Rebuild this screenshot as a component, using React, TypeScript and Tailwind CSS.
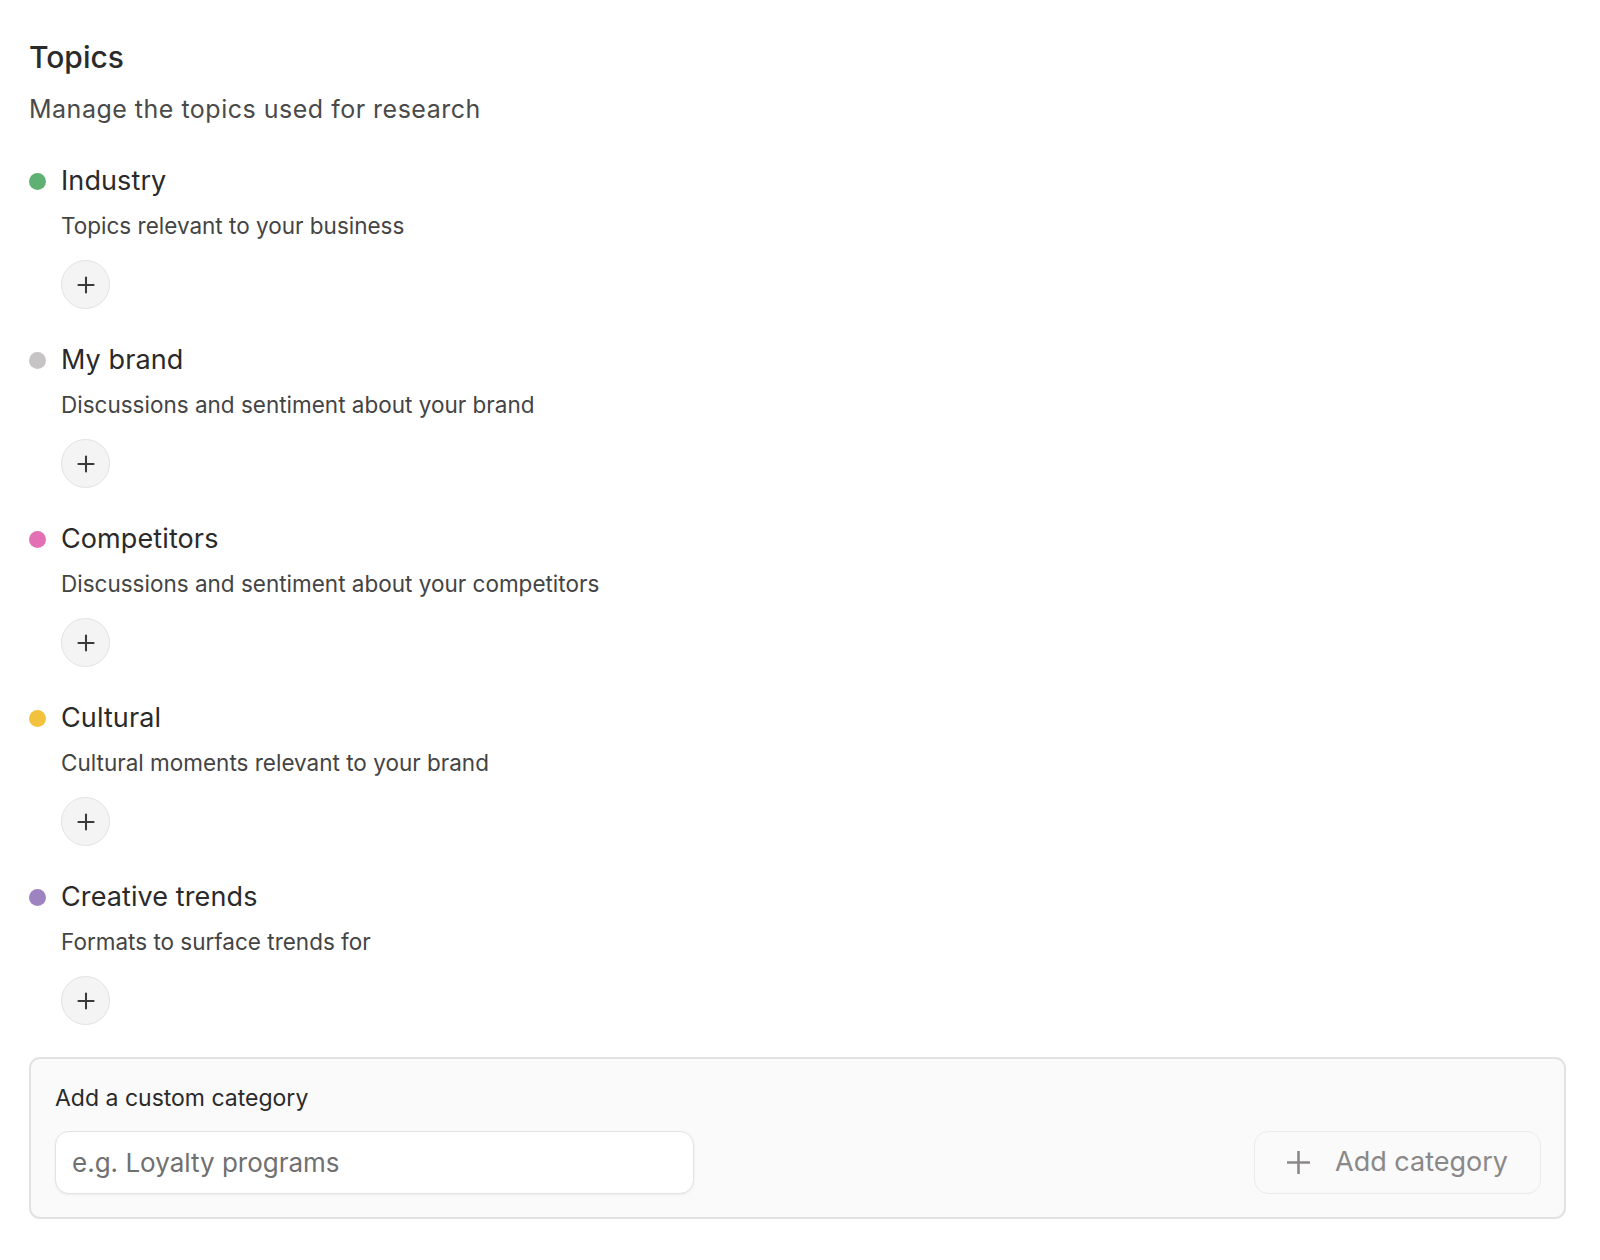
import { Plus } from "lucide-react";

const categories = [
  { name: "Industry", description: "Topics relevant to your business", color: "bg-[#5fb073]" },
  { name: "My brand", description: "Discussions and sentiment about your brand", color: "bg-[#c6c4c4]" },
  { name: "Competitors", description: "Discussions and sentiment about your competitors", color: "bg-[#e36fb4]" },
  { name: "Cultural", description: "Cultural moments relevant to your brand", color: "bg-[#f2c23c]" },
  { name: "Creative trends", description: "Formats to surface trends for", color: "bg-[#9d83c0]" },
];

export default function App() {
  return (
    <div className="min-h-screen bg-white px-[29px] pt-[38px] text-[#2b2b2b] [font-family:Inter,'Noto_Sans',sans-serif]">
      <h1 className="text-[30px] font-medium leading-[38px]">Topics</h1>
      <p className="mt-[16px] text-[25px] leading-[34px] tracking-[0.5px] text-[#4a4a4a]">
        Manage the topics used for research
      </p>

      <div className="mt-[38px] flex flex-col gap-[34px]">
        {categories.map((c) => (
          <section key={c.name}>
            <div className="flex items-center">
              <span className={`h-[17px] w-[17px] rounded-full ${c.color}`} />
              <h2 className="ml-[15px] text-[27px] leading-[34px] tracking-[0.1px] text-[#2a2a2a]">{c.name}</h2>
            </div>
            <p className="ml-[32px] mt-[13px] text-[22.5px] leading-[30px] text-[#444444]">{c.description}</p>
            <button className="ml-[32px] mt-[19px] flex h-[49px] w-[49px] items-center justify-center rounded-full border border-[#e2e2e2] bg-[#f4f4f4] text-[#3a3a3a]">
              <Plus size={26} strokeWidth={1.9} />
            </button>
          </section>
        ))}
      </div>

      <div className="mt-[32px] w-[1537px] rounded-[11px] border-2 border-[#e2e2e2] bg-[#fafafa] pb-[23px] pl-[24px] pr-[23px] pt-[24px]">
        <div className="text-[23px] leading-[30px] text-[#2a2a2a]">Add a custom category</div>
        <div className="mt-[18px] flex items-center justify-between">
          <input
            type="text"
            placeholder="e.g. Loyalty programs"
            className="h-[63px] w-[639px] rounded-[14px] border border-[#e3e3e3] bg-white px-[16px] text-[26px] text-[#2a2a2a] shadow-[0_1px_3px_rgba(0,0,0,0.06)] outline-none placeholder:text-[#707070]"
          />
          <button className="flex h-[63px] w-[287px] items-center rounded-[14px] border border-[#ebebeb] bg-[#fafafa] pl-[32px] text-[27px] text-[#8a8888]">
            <svg width="23" height="23" viewBox="0 0 23 23" fill="none" stroke="currentColor" strokeWidth="2.6">
              <path d="M11.5 0v23M0 11.5h23" />
            </svg>
            <span className="ml-[25px]">Add category</span>
          </button>
        </div>
      </div>
    </div>
  );
}
